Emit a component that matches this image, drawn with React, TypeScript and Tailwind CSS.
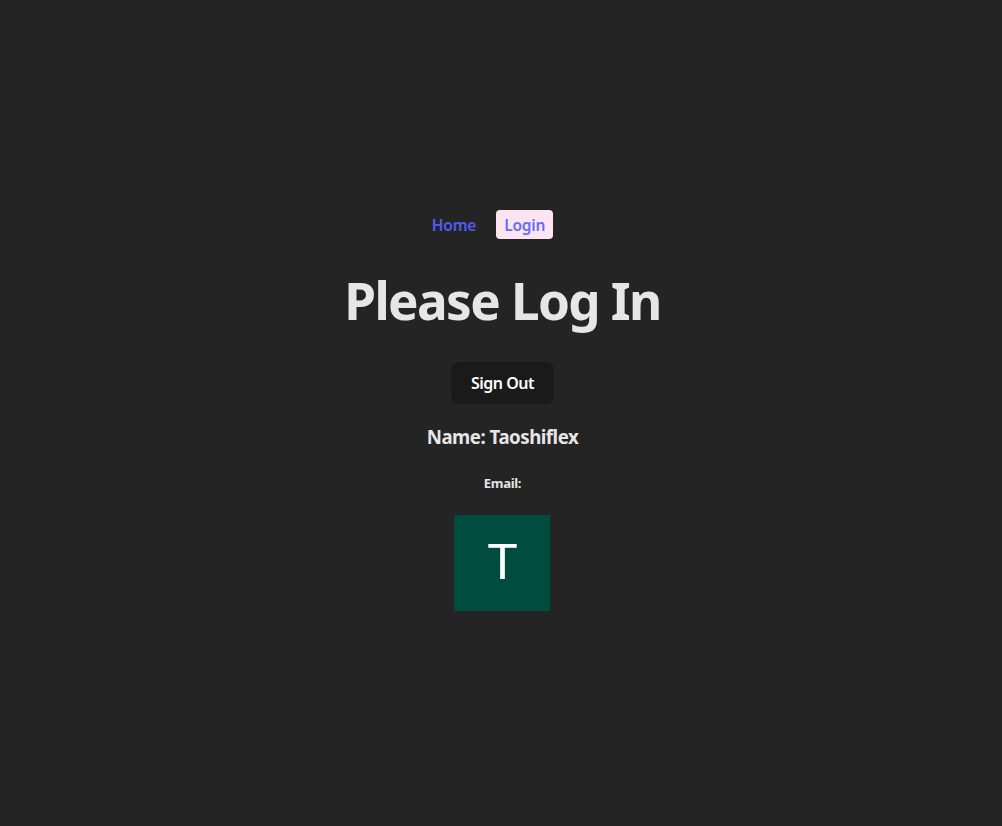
export default function App() {
  return (
    <div
      className="min-h-screen w-full bg-[#242424] text-[rgba(255,255,255,0.87)] flex items-center justify-center pb-[6px] pl-[3px]"
      style={{ fontFamily: '"Noto Sans", "Open Sans", sans-serif' }}
    >
      <div className="flex flex-col items-center text-center">
        <nav className="flex items-center gap-5 h-[29px] mr-[20px]">
          <a className="text-[#535bf2] font-semibold text-[15.5px] tracking-[-0.2px] pt-[3px]">Home</a>
          <a className="bg-[#fce4f2] text-[#646cff] font-semibold text-[15.5px] tracking-[-0.2px] rounded-[4px] px-2 pt-[3px] h-[29px] flex items-center">
            Login
          </a>
        </nav>
        <h1 className="mt-[33px] text-[51.2px] leading-[56px] font-bold text-[#e6e6e6] tracking-[-1.6px]">
          Please Log In
        </h1>
        <button className="mt-[34px] h-[42px] w-[103px] rounded-lg bg-[#1a1a1a] text-white text-base font-semibold tracking-[-0.5px]">
          Sign Out
        </button>
        <h3 className="mt-[21px] text-[18.7px] leading-6 font-bold text-[#e6e6e6] tracking-[-0.5px]">Name: Taoshiflex</h3>
        <h5 className="mt-[26px] text-[13px] leading-4 font-bold text-[#e6e6e6] tracking-[-0.3px]">Email:</h5>
        <div
          className="mt-6 w-24 h-24 bg-[#004d40] text-white flex items-center justify-center text-[50px]"
          style={{ fontFamily: '"Liberation Sans", Arial, sans-serif' }}
        >
          T
        </div>
      </div>
    </div>
  );
}
